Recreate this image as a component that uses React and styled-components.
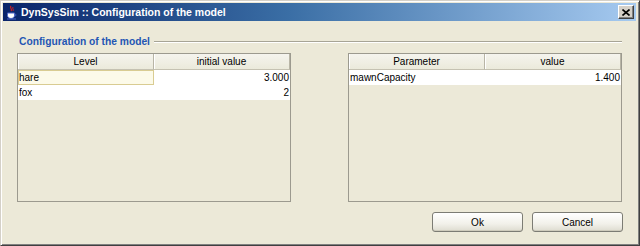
import React from "react";
import styled, { createGlobalStyle } from "styled-components";

const Global = createGlobalStyle`
  html, body { margin: 0; padding: 0; width: 640px; height: 246px; overflow: hidden; background: #ece9d8; }
  * { box-sizing: border-box; }
`;

const Window = styled.div`
  width: 640px;
  height: 246px;
  display: flex;
  flex-direction: column;
  background: #ece9d8;
  border-top: 1px solid #d4d0c8;
  border-left: 1px solid #d4d0c8;
  border-right: 1px solid #404040;
  border-bottom: 1px solid #404040;
  box-shadow: inset 1px 1px 0 #ffffff, inset -1px -1px 0 #808080;
  padding: 2px 3px 3px 2px;
  font-family: "Liberation Sans", Arial, sans-serif;
`;

const TitleBar = styled.div`
  height: 18px;
  flex: none;
  display: flex;
  align-items: center;
  padding-left: 3px;
  padding-right: 2px;
  background: linear-gradient(to right, #0a246a 0%, #3a6ea5 45%, #a6caf0 100%);
`;

const TitleText = styled.span`
  flex: 1;
  margin-left: 4px;
  color: #ffffff;
  font-weight: bold;
  font-size: 10.5px;
  white-space: nowrap;
`;

const CloseButton = styled.div`
  width: 16px;
  height: 14px;
  display: flex;
  align-items: center;
  justify-content: center;
  background: #d4d0c8;
  border-top: 1px solid #ffffff;
  border-left: 1px solid #ffffff;
  border-right: 1px solid #404040;
  border-bottom: 1px solid #404040;
  box-shadow: inset -1px -1px 0 #808080;
`;

const Body = styled.div`
  flex: 1;
  display: flex;
  flex-direction: column;
  padding: 14px 13px 0 14px;
`;

const GroupHeader = styled.div`
  height: 13px;
  display: flex;
  align-items: center;
  gap: 4px;
  padding-left: 2px;
`;

const GroupTitle = styled.span`
  color: #2456b4;
  font-weight: bold;
  font-size: 10.25px;
  white-space: nowrap;
`;

const GroupLine = styled.div`
  flex: 1;
  margin-right: 1px;
  height: 2px;
  border-top: 1px solid #a7a496;
  border-bottom: 1px solid #ffffff;
`;

const TablesRow = styled.div`
  margin-top: 5px;
  display: flex;
  gap: 57px;
`;

const ScrollPane = styled.div`
  width: 274px;
  height: 149px;
  border: 1px solid #9c9a8f;
  background: #ece9d8;
`;

const HeaderRow = styled.div`
  display: grid;
  grid-template-columns: 136px 136px;
  height: 16px;
`;

const HeaderCell = styled.div`
  display: flex;
  align-items: center;
  justify-content: center;
  font-size: 10px;
  color: #000;
  background: linear-gradient(#f5f4ee, #ebeadb);
  border-bottom: 1px solid #c5c2b2;
  border-right: 1px solid #b8b5a6;
  box-shadow: inset 1px 0 0 #ffffff;
`;

const Row = styled.div`
  display: grid;
  grid-template-columns: 136px 136px;
  height: 15px;
  background: #ffffff;
`;

const Cell = styled.div`
  font-size: 10px;
  line-height: 15px;
  padding: 0 1px;
  color: #000;
  white-space: nowrap;
  text-align: ${(p) => (p.$right ? "right" : "left")};
  background: ${(p) => (p.$focus ? "#fcfae9" : "transparent")};
  box-shadow: ${(p) => (p.$focus ? "inset 0 0 0 1px #d9cc92" : "none")};
`;

const ButtonRow = styled.div`
  margin-top: 10px;
  display: flex;
  justify-content: flex-end;
  gap: 9px;
`;

const Button = styled.button`
  width: 91px;
  height: 20px;
  padding: 0;
  border: 1px solid #7c7c74;
  border-radius: 3px;
  background: linear-gradient(#ffffff, #f2f1ea 60%, #dedcd0);
  box-shadow: inset 0 -1px 0 #cfccbd;
  font-family: "Liberation Sans", Arial, sans-serif;
  font-size: 10px;
  color: #000;
`;

const JavaIcon = () => (
  <svg width="11" height="15" viewBox="0 0 11 15">
    <path d="M5 1 C3 3 7 4 5 6" stroke="#d02020" strokeWidth="1.2" fill="none" />
    <path d="M7 2 C6 3.5 8 4.5 7 6" stroke="#d02020" strokeWidth="1" fill="none" />
    <path d="M1.5 8 h7 v2.5 c0 2 -2 3 -3.5 3 c-1.5 0 -3.5 -1 -3.5 -3 z" fill="#ffffff" stroke="#4a64c8" strokeWidth="1" />
    <path d="M8.5 9 c2 0 2 2 0 2" stroke="#4a64c8" strokeWidth="1" fill="none" />
    <path d="M1 14 h9" stroke="#4a64c8" strokeWidth="1" />
  </svg>
);

const CloseIcon = () => (
  <svg width="8" height="7" viewBox="0 0 8 7">
    <path d="M0.5 0.5 L7.5 6.5 M7.5 0.5 L0.5 6.5" stroke="#000" strokeWidth="1.6" />
  </svg>
);

const Table = ({ headers, rows, focus }) => (
  <ScrollPane>
    <HeaderRow>
      {headers.map((h) => (
        <HeaderCell key={h}>{h}</HeaderCell>
      ))}
    </HeaderRow>
    {rows.map(([name, value], i) => (
      <Row key={name}>
        <Cell $focus={focus === i}>{name}</Cell>
        <Cell $right>{value}</Cell>
      </Row>
    ))}
  </ScrollPane>
);

export default function App() {
  return (
    <>
      <Global />
      <Window>
        <TitleBar>
          <JavaIcon />
          <TitleText>DynSysSim :: Configuration of the model</TitleText>
          <CloseButton>
            <CloseIcon />
          </CloseButton>
        </TitleBar>
        <Body>
          <GroupHeader>
            <GroupTitle>Configuration of the model</GroupTitle>
            <GroupLine />
          </GroupHeader>
          <TablesRow>
            <Table
              headers={["Level", "initial value"]}
              rows={[["hare", "3.000"], ["fox", "2"]]}
              focus={0}
            />
            <Table headers={["Parameter", "value"]} rows={[["mawnCapacity", "1.400"]]} />
          </TablesRow>
          <ButtonRow>
            <Button>Ok</Button>
            <Button>Cancel</Button>
          </ButtonRow>
        </Body>
      </Window>
    </>
  );
}
